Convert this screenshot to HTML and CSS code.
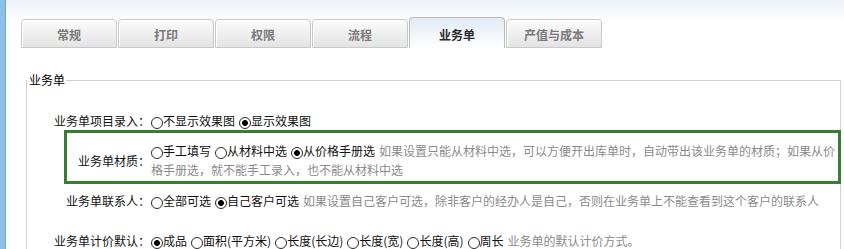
FILE: index.html
```html
<!DOCTYPE html>
<html lang="zh-CN">
<head>
<meta charset="utf-8">
<title>业务单设置</title>
<link rel="stylesheet" href="styles.css">
</head>
<body>
<div class="app">
  <div class="sidebar"></div>
  <div class="main">
    <div class="tabs">
      <div class="tab">常规</div>
      <div class="tab">打印</div>
      <div class="tab">权限</div>
      <div class="tab">流程</div>
      <div class="tab active">业务单</div>
      <div class="tab">产值与成本</div>
    </div>
    <fieldset class="group">
      <legend class="legend">业务单</legend>
      <div class="row r1">
        <div class="label">业务单项目录入：</div>
        <div class="field"><span class="opt"><i class="radio"></i>不显示效果图</span><span class="opt"><i class="radio on"></i>显示效果图</span></div>
      </div>
      <div class="row boxed">
        <div class="label">业务单材质：</div>
        <div class="field"><span class="opt"><i class="radio"></i>手工填写</span><span class="opt"><i class="radio"></i>从材料中选</span><span class="opt"><i class="radio on"></i>从价格手册选</span><span class="desc">如果设置只能从材料中选，可以方便开出库单时，自动带出该业务单的材质；如果从价格手册选，就不能手工录入，也不能从材料中选</span></div>
      </div>
      <div class="row r3">
        <div class="label">业务单联系人：</div>
        <div class="field"><span class="opt"><i class="radio"></i>全部可选</span><span class="opt"><i class="radio on"></i>自己客户可选</span><span class="desc">如果设置自己客户可选，除非客户的经办人是自己，否则在业务单上不能查看到这个客户的联系人</span></div>
      </div>
      <div class="row r4">
        <div class="label">业务单计价默认：</div>
        <div class="field"><span class="opt"><i class="radio on"></i>成品</span><span class="opt"><i class="radio"></i>面积(平方米)</span><span class="opt"><i class="radio"></i>长度(长边)</span><span class="opt"><i class="radio"></i>长度(宽)</span><span class="opt"><i class="radio"></i>长度(高)</span><span class="opt"><i class="radio"></i>周长</span><span class="desc">业务单的默认计价方式。</span></div>
      </div>
    </fieldset>
  </div>
</div>
</body>
</html>
```

FILE: styles.css
```css
html, body {
  margin: 0;
  padding: 0;
  height: 100%;
  background: #fff;
  font-family: "Noto Sans CJK SC", "Noto Sans", sans-serif;
  font-size: 12px;
  color: #111;
  overflow: hidden;
}

.app {
  display: flex;
  height: 100%;
}

.sidebar {
  width: 5px;
  flex-shrink: 0;
  background: #8dc1e6;
  border-right: 1px solid #6fa6d4;
}

.main {
  flex: 1;
  padding-left: 15px;
  background: linear-gradient(#ebf2f9, #ffffff 22px);
  background-repeat: no-repeat;
}

.tabs {
  display: flex;
  align-items: flex-end;
  gap: 1px;
  padding-top: 17px;
  height: 31px;
}

.tab {
  box-sizing: border-box;
  width: 96px;
  height: 29px;
  padding-top: 4px;
  line-height: 22px;
  text-align: center;
  font-weight: bold;
  color: #7a7a7a;
  border: 1px solid #c8c8c8;
  border-radius: 4px 4px 0 0;
  background: linear-gradient(#fbfbfb, #e3e3e3);
  box-shadow: inset 1px 1px 0 #ffffff;
}

.tab.active {
  height: 31px;
  padding-top: 6px;
  color: #2a2a2a;
  border-color: #bcbcbc;
  border-bottom: 0;
  background: linear-gradient(#e1eaf5, #ffffff);
  box-shadow: none;
}

.group {
  margin: 24px 3px 0 5px;
  padding: 0 0 20px 0;
  border: 1px solid #d2d2d2;
  min-inline-size: 0;
}

.legend {
  padding: 0 1px 0 2px;
  line-height: 16px;
  color: #000;
}

.row {
  display: flex;
  align-items: center;
  line-height: 19px;
}

.label {
  flex-shrink: 0;
  width: 123px;
  text-align: right;
  white-space: nowrap;
  color: #111;
}

.field {
  flex: 1;
  min-width: 0;
  padding-left: 1px;
}

.r1 {
  margin-top: 23px;
}

.boxed {
  margin: 0 -1px 0 37px;
  padding: 8px 0 2px 0;
  border: 3px solid #357f35;
}

.boxed .label {
  width: 83px;
}

.r3 {
  margin-top: 7px;
}

.r4 {
  margin-top: 21px;
}

.opt {
  display: inline-block;
  white-space: nowrap;
  margin-right: 4px;
  color: #111;
}

.radio {
  display: inline-block;
  box-sizing: border-box;
  width: 12px;
  height: 12px;
  border: 1px solid #2a2a2a;
  border-radius: 50%;
  background: #fff;
  vertical-align: -3px;
}

.radio.on {
  background: radial-gradient(circle, #000 0, #000 2.6px, #fff 3.2px);
}

.desc {
  color: #8a8a8a;
}
```
